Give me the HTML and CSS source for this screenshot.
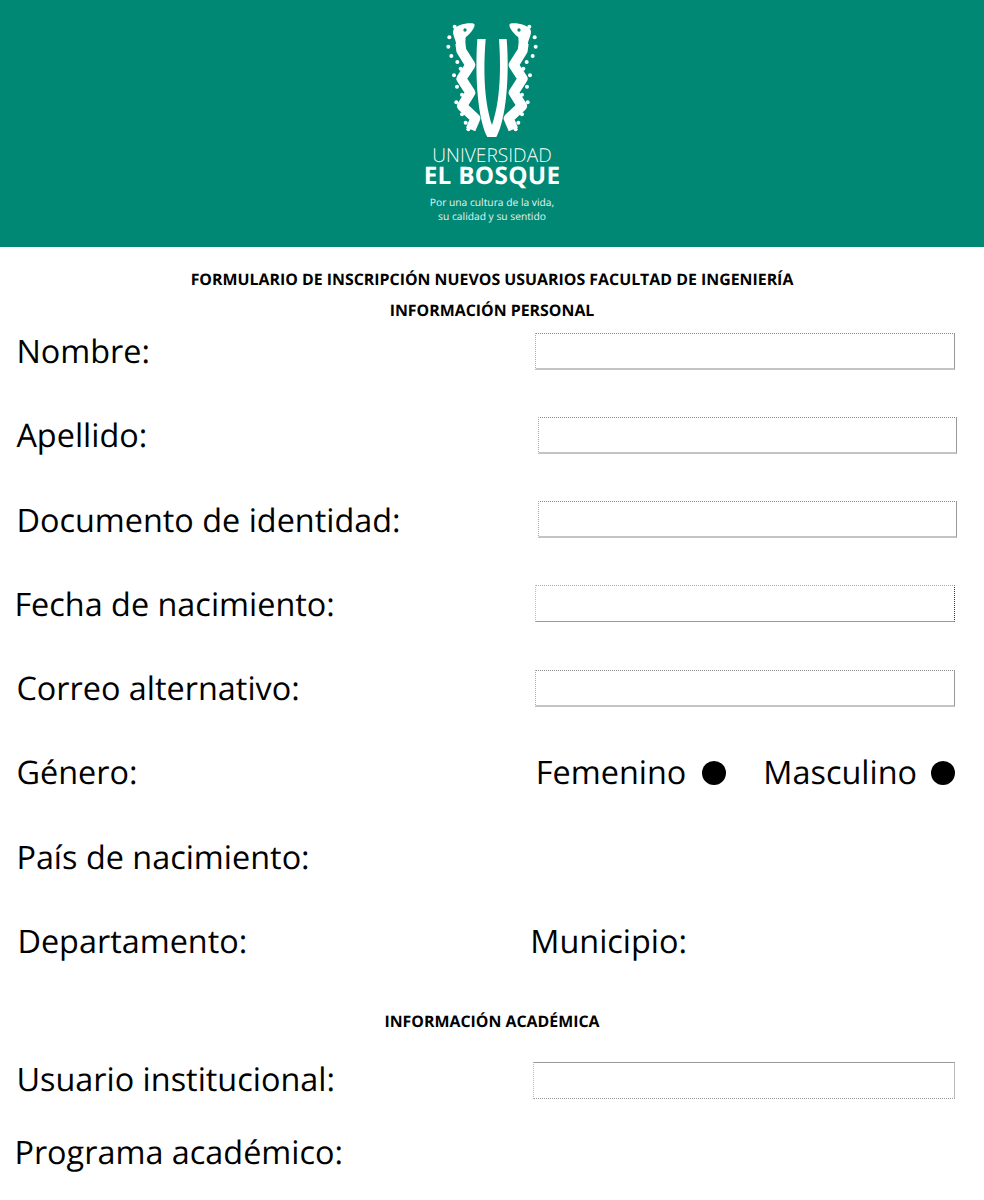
FILE: index.html
```html
<!DOCTYPE html>
<html lang="es">
<head>
<meta charset="utf-8">
<title>Formulario de inscripción</title>
<link rel="stylesheet" href="styles.css">
</head>
<body>
<header class="banner">
  <svg class="crest" viewBox="0 0 552 405" aria-hidden="true">
    <path class="body" d="M232 87C224 200 234 330 262 381L289 381C318 330 329 200 320 87L297 87C305 200 297 285 276 345C256 285 248 200 257 87Z"/>
    <g id="snake">
      <path class="body" d="M160 60C168 44 205 36 222 41C228 46 218 64 197 82L195 112L168 112C172 92 155 76 160 60Z"/>
      <path class="spine" d="M181 100L184 122L211 165L184 206L211 248L186 288L226 325L212 358"/>
      <circle class="eye" cx="195" cy="60" r="5"/>
      <g class="body">
        <circle cx="164" cy="50" r="6"/><circle cx="148" cy="82" r="6"/><circle cx="145" cy="110" r="6"/><circle cx="154" cy="138" r="6"/><circle cx="172" cy="156" r="6"/><circle cx="182" cy="176" r="6"/><circle cx="162" cy="196" r="6"/><circle cx="171" cy="230" r="6"/><circle cx="186" cy="254" r="6"/><circle cx="169" cy="277" r="6"/><circle cx="186" cy="313" r="6"/><circle cx="197" cy="338" r="6"/><circle cx="205" cy="358" r="6"/>
      </g>
    </g>
    <use href="#snake" transform="matrix(-1 0 0 1 552 0)"/>
  </svg>
  <p class="brand-light">UNIVERSIDAD</p>
  <p class="brand-bold">EL BOSQUE</p>
  <p class="motto">Por una cultura de la vida,<br>su calidad y su sentido</p>
</header>
<main class="sheet">
  <h1 class="title title-main">FORMULARIO DE INSCRIPCIÓN NUEVOS USUARIOS FACULTAD DE INGENIERÍA</h1>
  <h2 class="title title-sub">INFORMACIÓN PERSONAL</h2>
  <section class="rows">
    <div class="row"><span class="label">Nombre:</span><span class="box"></span></div>
    <div class="row row-wide"><span class="label">Apellido:</span><span class="box box-short"></span></div>
    <div class="row row-wide"><span class="label">Documento de identidad:</span><span class="box box-short"></span></div>
    <div class="row"><span class="label nudge-back">Fecha de nacimiento:</span><span class="box box-b"></span></div>
    <div class="row"><span class="label">Correo alternativo:</span><span class="box"></span></div>
    <div class="row"><span class="label">Género:</span>
      <span class="options"><span class="option option-first"><span class="label">Femenino</span><i class="dot"></i></span><span class="option"><span class="label">Masculino</span><i class="dot"></i></span></span>
    </div>
    <div class="row"><span class="label">País de nacimiento:</span></div>
    <div class="row row-split"><span class="label nudge-on">Departamento:</span><span class="label">Municipio:</span></div>
  </section>
  <h2 class="title title-acad">INFORMACIÓN ACADÉMICA</h2>
  <section class="rows-acad">
    <div class="row"><span class="label label-up">Usuario institucional:</span><span class="box box-long"></span></div>
    <div class="row"><span class="label label-up nudge-back">Programa académico:</span></div>
  </section>
</main>
</body>
</html>
```
FILE: styles.css
```css
* { box-sizing: border-box; }
html, body { margin: 0; padding: 0; }
body {
  background: #fff;
  color: #000;
  font-family: "Open Sans", "Noto Sans", sans-serif;
  text-rendering: geometricPrecision;
  height: 1200px;
  overflow: hidden;
}
.banner {
  height: 247px;
  background: #018874;
  color: #fff;
  display: flex;
  flex-direction: column;
  align-items: center;
  padding-top: 10px;
}
.crest { width: 184px; height: 135px; flex: none; }
.body { fill: #fff; }
.spine { fill: none; stroke: #fff; stroke-width: 30; stroke-linejoin: round; stroke-linecap: butt; }
.eye { fill: #018874; }
.banner p { margin: 0; text-align: center; }
.brand-light { font-size: 19.2px; line-height: 18px; font-weight: 300; margin-top: 1px !important; }
.brand-bold { font-size: 24.3px; line-height: 24px; font-weight: 700; letter-spacing: .3px; }
.motto { font-size: 10.25px; line-height: 14px; margin-top: 8px !important; color: #e6f3f1; }

.title { margin: 0; text-align: center; font-size: 15.9px; line-height: 20px; font-weight: 700; }
.title-main { padding-top: 22px; }
.title-sub { padding-top: 11px; }
.rows { display: flex; flex-direction: column; gap: 44.25px; margin-top: 11px; }
.title-acad { margin-top: 50px; }
.rows-acad { display: flex; flex-direction: column; gap: 33px; margin-top: 29.8px; }
.row {
  height: 40px;
  display: flex;
  align-items: center;
  justify-content: space-between;
  padding: 0 29px 0 16.4px;
}
.row-wide { padding-right: 27px; }
.row-split { padding-right: 297px; }
.label { font-size: 32.4px; line-height: 40px; white-space: nowrap; }
.label-up { line-height: 37px; padding-bottom: 3px; }
.nudge-back { margin-left: -2px; }
.nudge-on { margin-left: 1px; }
.box {
  width: 420px;
  height: 37px;
  border-top: 1px dotted #888;
  border-left: 1px dotted #aaa;
  border-right: 1px solid #999;
  border-bottom: 2px solid #c4c4c4;
}
.box-short { width: 419px; }
.box-b {
  border-top-color: #aaa;
  border-left-color: #bbb;
  border-right: 1px dotted #333;
  border-bottom: 1px solid #999;
}
.box-long {
  width: 422px;
  border-top: 1px solid #999;
  border-left-color: #bbb;
  border-bottom: 1px dotted #999;
  border-right-color: #bbb;
}
.options { display: flex; gap: 37px; }
.option { display: flex; align-items: center; gap: 14px; white-space: nowrap; }
.option-first { gap: 16px; }
.dot { width: 24px; height: 24px; border-radius: 50%; background: #000; display: block; margin-top: 1px; }
```
